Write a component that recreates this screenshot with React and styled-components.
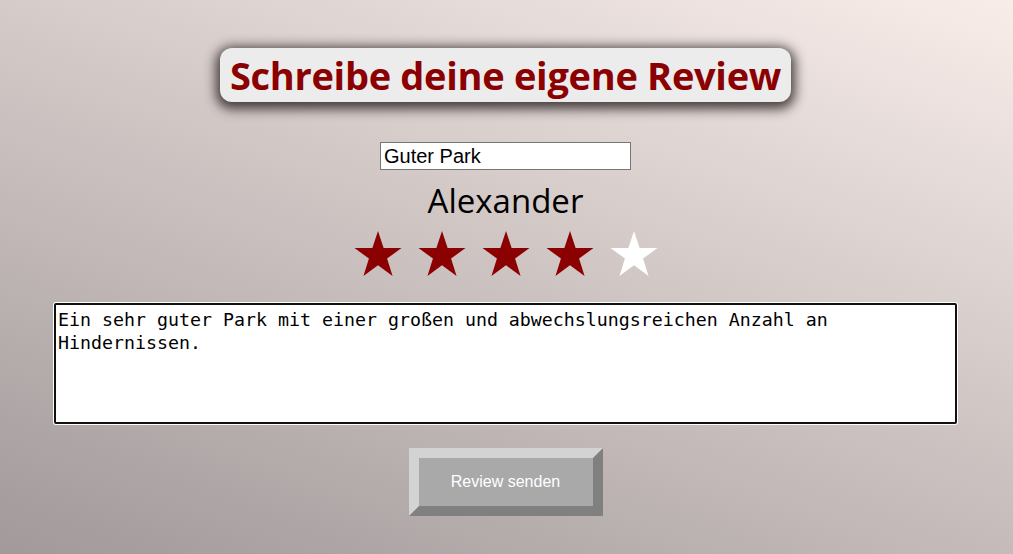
import React, { useState } from "react";
import styled, { createGlobalStyle } from "styled-components";

const GlobalStyle = createGlobalStyle`
  html, body {
    margin: 0;
    padding: 0;
    height: 100%;
  }
  body {
    font-family: "Open Sans", "Noto Sans", sans-serif;
    background: linear-gradient(200deg, #f8ede9 0%, #a1999a 100%);
    background-attachment: fixed;
  }
`;

const STAR = "M24 0 L29.64 17.06 L47.5 17.06 L33.06 27.6 L38.56 45 L24 34.2 L9.44 45 L14.94 27.6 L0.5 17.06 L18.36 17.06 Z";

function Star({ filled, onClick }) {
  return (
    <StarButton onClick={onClick}>
      <svg width="48" height="45" viewBox="0 0 48 45">
        <path d={STAR} fill={filled ? "#8b0000" : "#ffffff"} />
      </svg>
    </StarButton>
  );
}

function App() {
  const [rating, setRating] = useState(4);
  const [title, setTitle] = useState("Guter Park");
  const [text, setText] = useState(
    "Ein sehr guter Park mit einer großen und abwechslungsreichen Anzahl an Hindernissen."
  );

  // caret at the end of the text, like in the screenshot
  const moveCaretToEnd = (e) => {
    const len = e.target.value.length;
    e.target.setSelectionRange(len, len);
  };

  return (
    <Page>
      <GlobalStyle />
      <Heading>Schreibe deine eigene Review</Heading>

      <TitleInput value={title} onChange={(e) => setTitle(e.target.value)} />

      <UserName>Alexander</UserName>

      <Stars>
        {[1, 2, 3, 4, 5].map((n) => (
          <Star key={n} filled={n <= rating} onClick={() => setRating(n)} />
        ))}
      </Stars>

      <ReviewText
        autoFocus
        onFocus={moveCaretToEnd}
        value={text}
        onChange={(e) => setText(e.target.value)}
      />

      <SendButton>Review senden</SendButton>
    </Page>
  );
}

export default App;

const Page = styled.div`
  min-height: 100vh;
  display: flex;
  flex-direction: column;
  align-items: center;
  padding: 48px 2px 0 0;
  box-sizing: border-box;
`;

const Heading = styled.h1`
  margin: 0;
  background: #ececec;
  color: #8b0000;
  font-family: "Open Sans", "Noto Sans", sans-serif;
  font-weight: 700;
  font-size: 38px;
  line-height: 54px;
  height: 54px;
  padding: 0 10px;
  border-radius: 12px;
  box-shadow: 0 3px 12px 4px rgba(30, 22, 22, 0.8);
  letter-spacing: -0.3px;
`;

const TitleInput = styled.input`
  margin-top: 40px;
  width: 251px;
  height: 28px;
  box-sizing: border-box;
  border: 1px solid #767676;
  padding: 1px 3px 0;
  font-family: "Liberation Sans", Arial, sans-serif;
  font-size: 20px;
  color: #000;
  background: #fff;
  outline: none;
`;

const UserName = styled.div`
  margin-top: 8px;
  font-family: "Open Sans", "Noto Sans", sans-serif;
  font-size: 33px;
  line-height: 46px;
  color: #000;
`;

const Stars = styled.div`
  margin-top: 7px;
  display: flex;
  gap: 16px;
`;

const StarButton = styled.span`
  display: block;
  width: 48px;
  height: 45px;
  cursor: pointer;

  > svg {
    display: block;
  }
`;

const ReviewText = styled.textarea`
  margin-top: 27px;
  width: 903px;
  height: 121px;
  box-sizing: border-box;
  border: 2px solid #111;
  border-radius: 2px;
  box-shadow: 0 0 0 1px #fff;
  padding: 3px 2px;
  font-family: "DejaVu Sans Mono", "Liberation Mono", monospace;
  font-size: 18.27px;
  line-height: 23px;
  color: #000;
  background: #fff;
  caret-color: #000;
  resize: none;
  outline: none;
`;

const SendButton = styled.button`
  margin-top: 24px;
  width: 194px;
  height: 68px;
  box-sizing: border-box;
  border: 10px solid;
  border-color: #d3d3d3 #808080 #808080 #d3d3d3;
  background: #a9a9a9;
  color: #fff;
  font-family: "Liberation Sans", Arial, sans-serif;
  font-size: 16px;
  cursor: pointer;
`;
